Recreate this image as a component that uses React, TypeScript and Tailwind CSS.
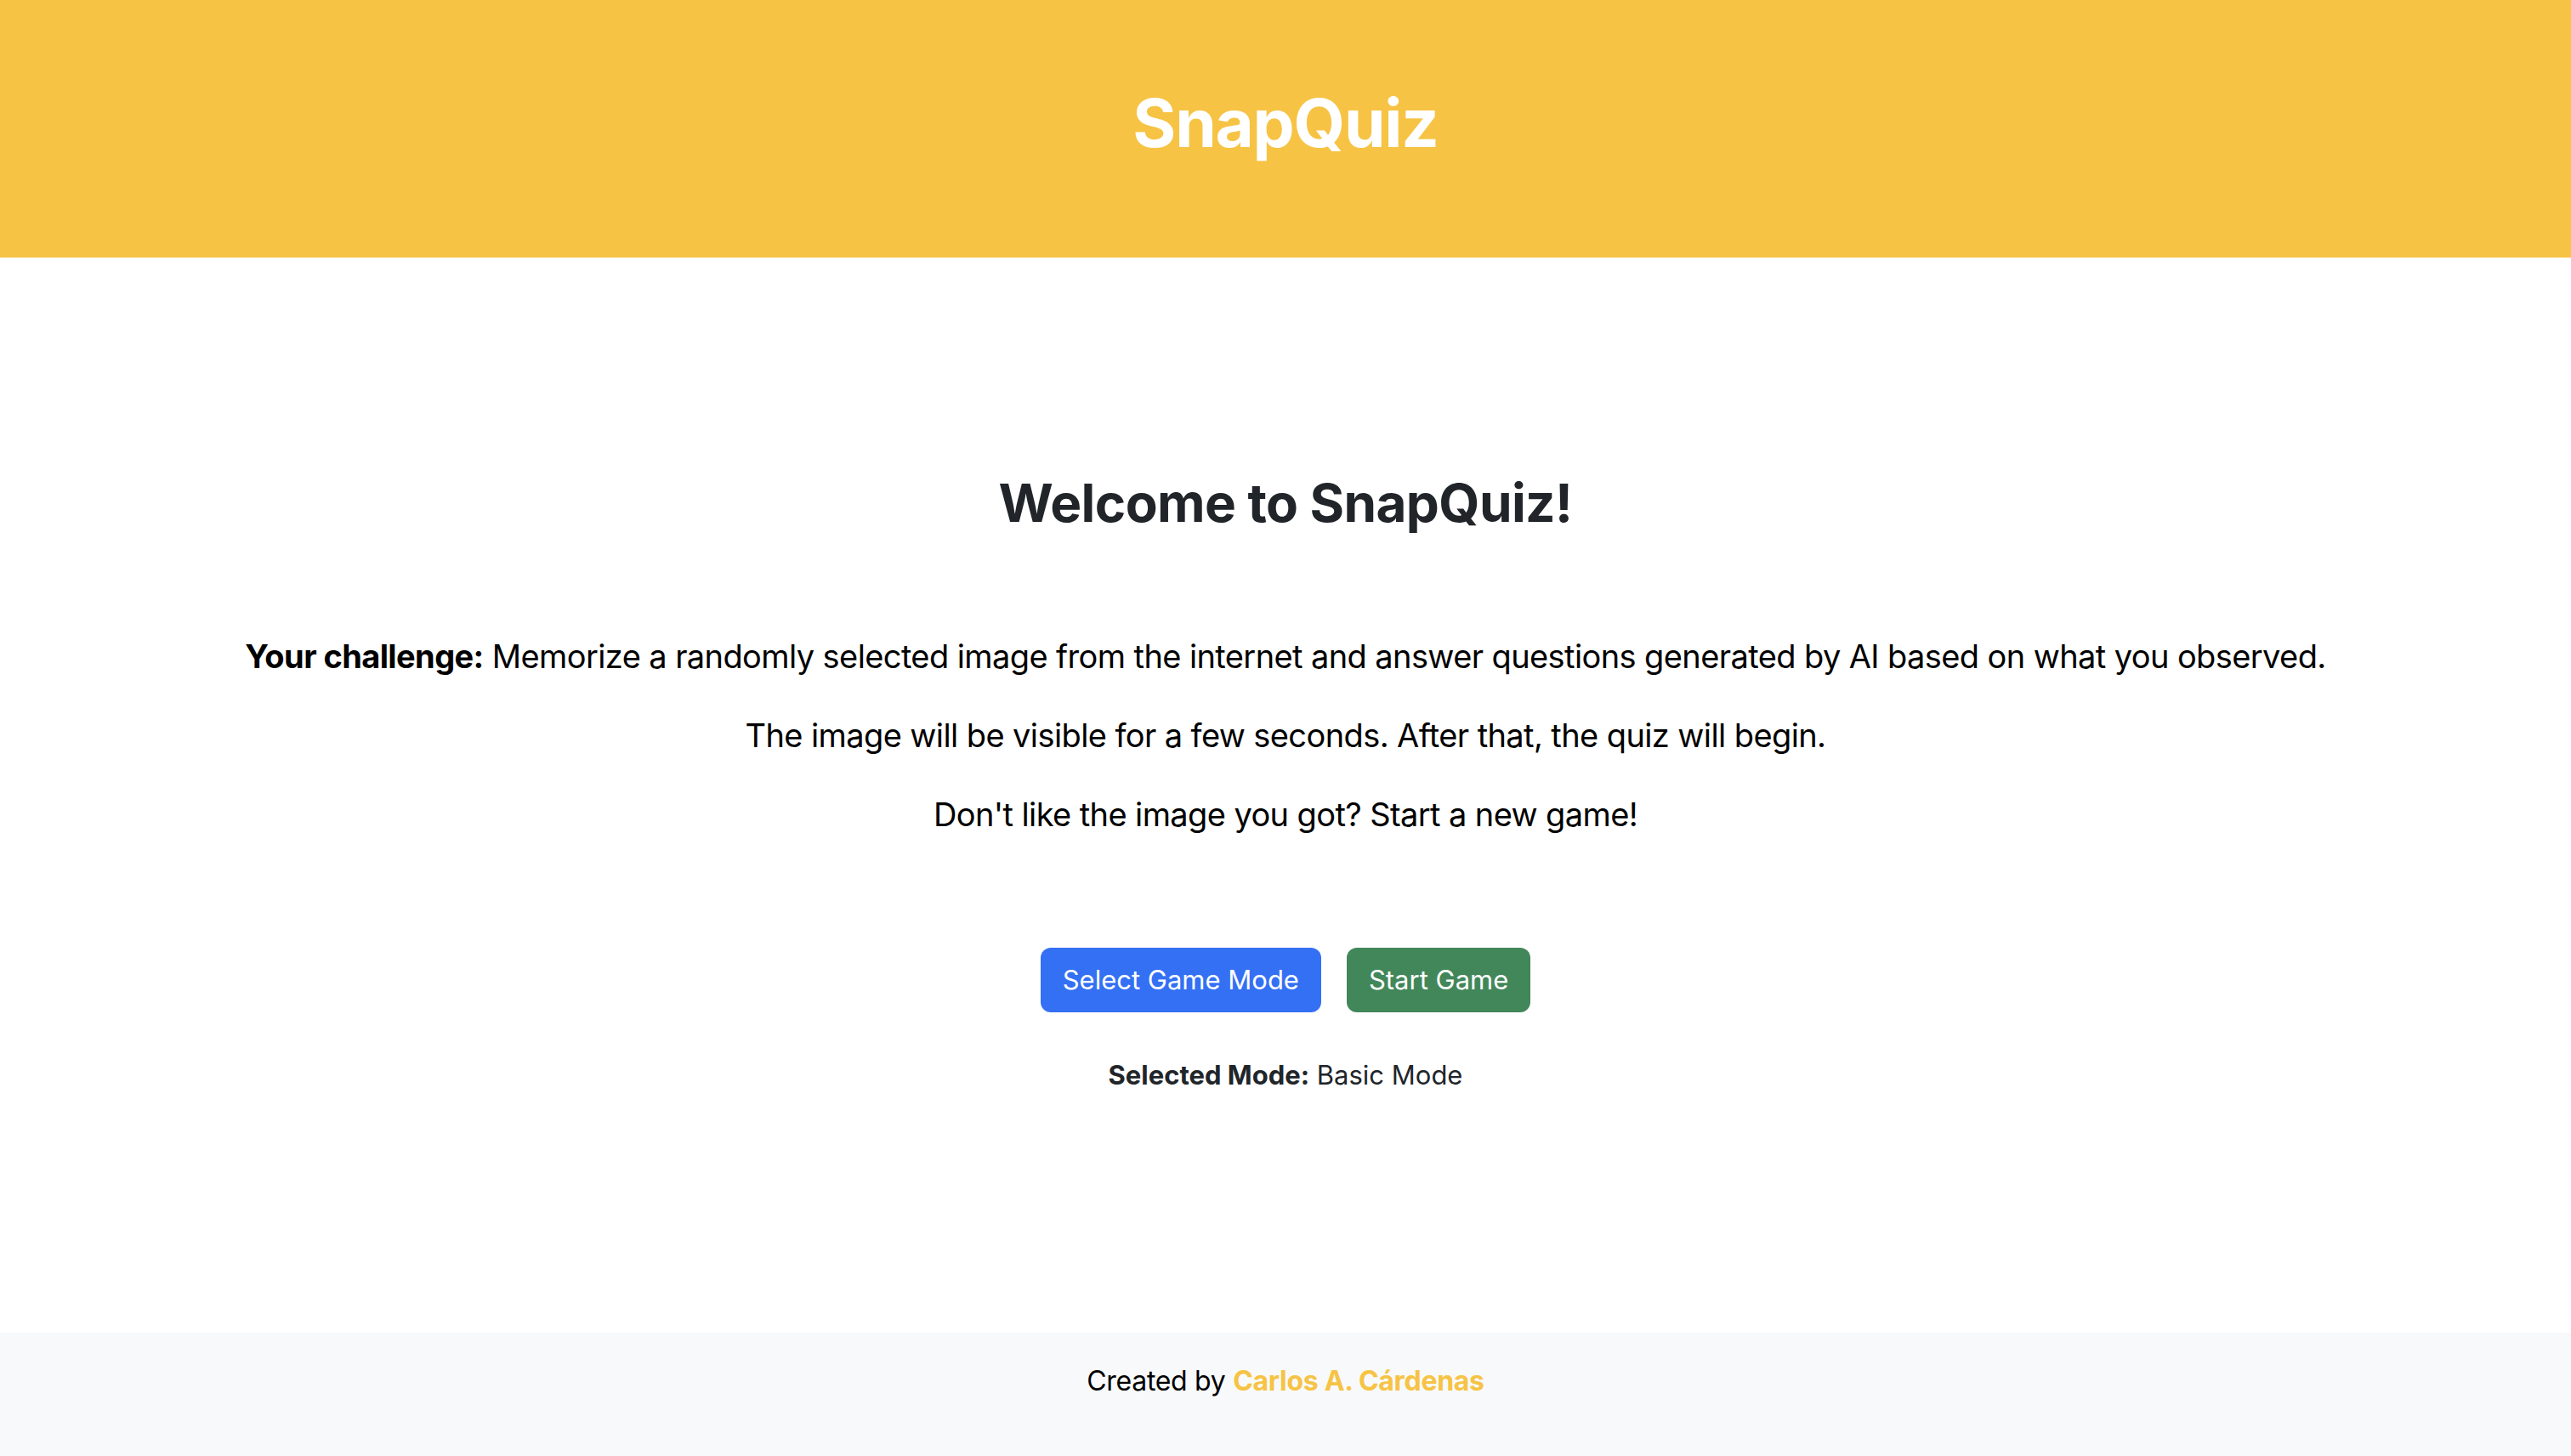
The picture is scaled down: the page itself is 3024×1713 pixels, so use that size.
const App = () => {
  return (
    <div
      className="min-h-screen flex flex-col bg-white"
      style={{ fontFamily: "Inter, 'Noto Sans', sans-serif" }}
    >
      <header className="h-[303px] bg-[#f6c344] flex items-center justify-center pb-[14px]">
        <h1 className="text-[78px] font-bold text-white leading-[1.2] tracking-[-1.2px]">
          SnapQuiz
        </h1>
      </header>

      <main className="flex-1 flex flex-col items-center text-center pt-[252px]">
        <h2 className="text-[62px] font-bold text-[#212529] leading-[1.2] tracking-[-0.6px]">
          Welcome to SnapQuiz!
        </h2>

        <div className="mt-[113px] flex flex-col gap-[33px] text-[38px] leading-[60px] text-black tracking-[-0.6px]">
          <p>
            <strong className="font-bold">Your challenge:</strong> Memorize a
            randomly selected image from the internet and answer questions
            generated by AI based on what you observed.
          </p>
          <p>
            The image will be visible for a few seconds. After that, the quiz
            will begin.
          </p>
          <p>Don't like the image you got? Start a new game!</p>
        </div>

        <div className="mt-[127px] flex items-center gap-[30px]">
          <button
            type="button"
            className="h-[76px] px-[26px] rounded-[12px] bg-[#3470f4] text-white text-[31px]"
          >
            Select Game Mode
          </button>
          <button
            type="button"
            className="h-[76px] px-[26px] rounded-[12px] bg-[#42875a] text-white text-[31px]"
          >
            Start Game
          </button>
        </div>

        <p className="mt-[50px] text-[31px] leading-[48px] text-[#212529]">
          <strong className="font-bold">Selected Mode:</strong> Basic Mode
        </p>
      </main>

      <footer className="h-[145px] bg-[#f8f9fa] flex justify-center pt-[33px]">
        <p className="text-[32px] leading-[48px] text-black tracking-[-0.3px]">
          Created by{" "}
          <a href="#" className="font-bold text-[#f6c344]">
            Carlos A. Cárdenas
          </a>
        </p>
      </footer>
    </div>
  );
};

export default App;
